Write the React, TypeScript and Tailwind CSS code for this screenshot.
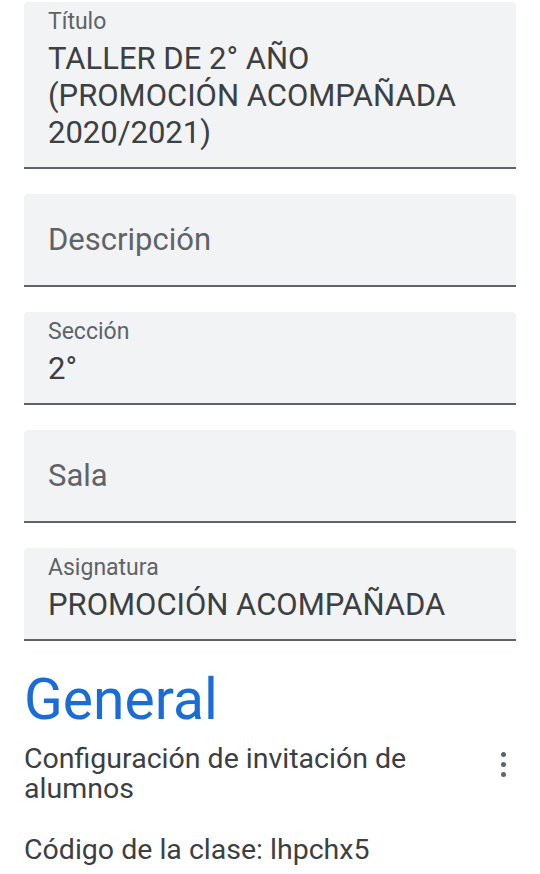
import { useState } from 'react';

interface FieldProps {
  label: string;
  lines?: string[];
}

function Field({ label, lines }: FieldProps) {
  const filled = Boolean(lines && lines.length);

  return (
    <div className="bg-[#f1f3f4] rounded-t-[4px] border-b-2 border-[#5f6368] px-6">
      {filled ? (
        <div className="pt-[6px] pb-[16px]">
          <p className="text-[23px] leading-[28px] text-[#5f6368]">{label}</p>
          <div className="mt-[4px] text-[31px] leading-[37px] text-[#3c4043]">
            {lines!.map((l) => (
              <p key={l}>{l}</p>
            ))}
          </div>
        </div>
      ) : (
        <div className="h-[91px] flex items-center">
          <p className="text-[31px] leading-[37px] text-[#5f6368]">{label}</p>
        </div>
      )}
    </div>
  );
}

export default function App() {
  const [fields] = useState<FieldProps[]>([
    { label: 'Título', lines: ['TALLER DE 2° AÑO', '(PROMOCIÓN ACOMPAÑADA', '2020/2021)'] },
    { label: 'Descripción' },
    { label: 'Sección', lines: ['2°'] },
    { label: 'Sala' },
    { label: 'Asignatura', lines: ['PROMOCIÓN ACOMPAÑADA'] },
  ]);

  return (
    <div className="w-[540px] h-[874px] overflow-hidden bg-white font-['Roboto',sans-serif]">
      <div className="px-6 pt-[2px] flex flex-col gap-[25px]">
        {fields.map((f) => (
          <Field key={f.label} label={f.label} lines={f.lines} />
        ))}
      </div>

      <div className="px-6 mt-[27px]">
        <h2 className="text-[57px] leading-[64px] text-[#1a6dd6]">General</h2>

        <div className="mt-[12px] flex items-start justify-between">
          <p className="w-[420px] text-[28.5px] leading-[30px] text-[#3c4043]">
            Configuración de invitación de alumnos
          </p>
          <button className="mt-[8px] mr-[10px] flex flex-col items-center gap-[5px] p-0">
            <span className="w-[5px] h-[5px] rounded-full bg-[#5f6368]" />
            <span className="w-[5px] h-[5px] rounded-full bg-[#5f6368]" />
            <span className="w-[5px] h-[5px] rounded-full bg-[#5f6368]" />
          </button>
        </div>

        <p className="mt-[31px] text-[28.5px] leading-[30px] text-[#3c4043]">Código de la clase: lhpchx5</p>
      </div>
    </div>
  );
}
